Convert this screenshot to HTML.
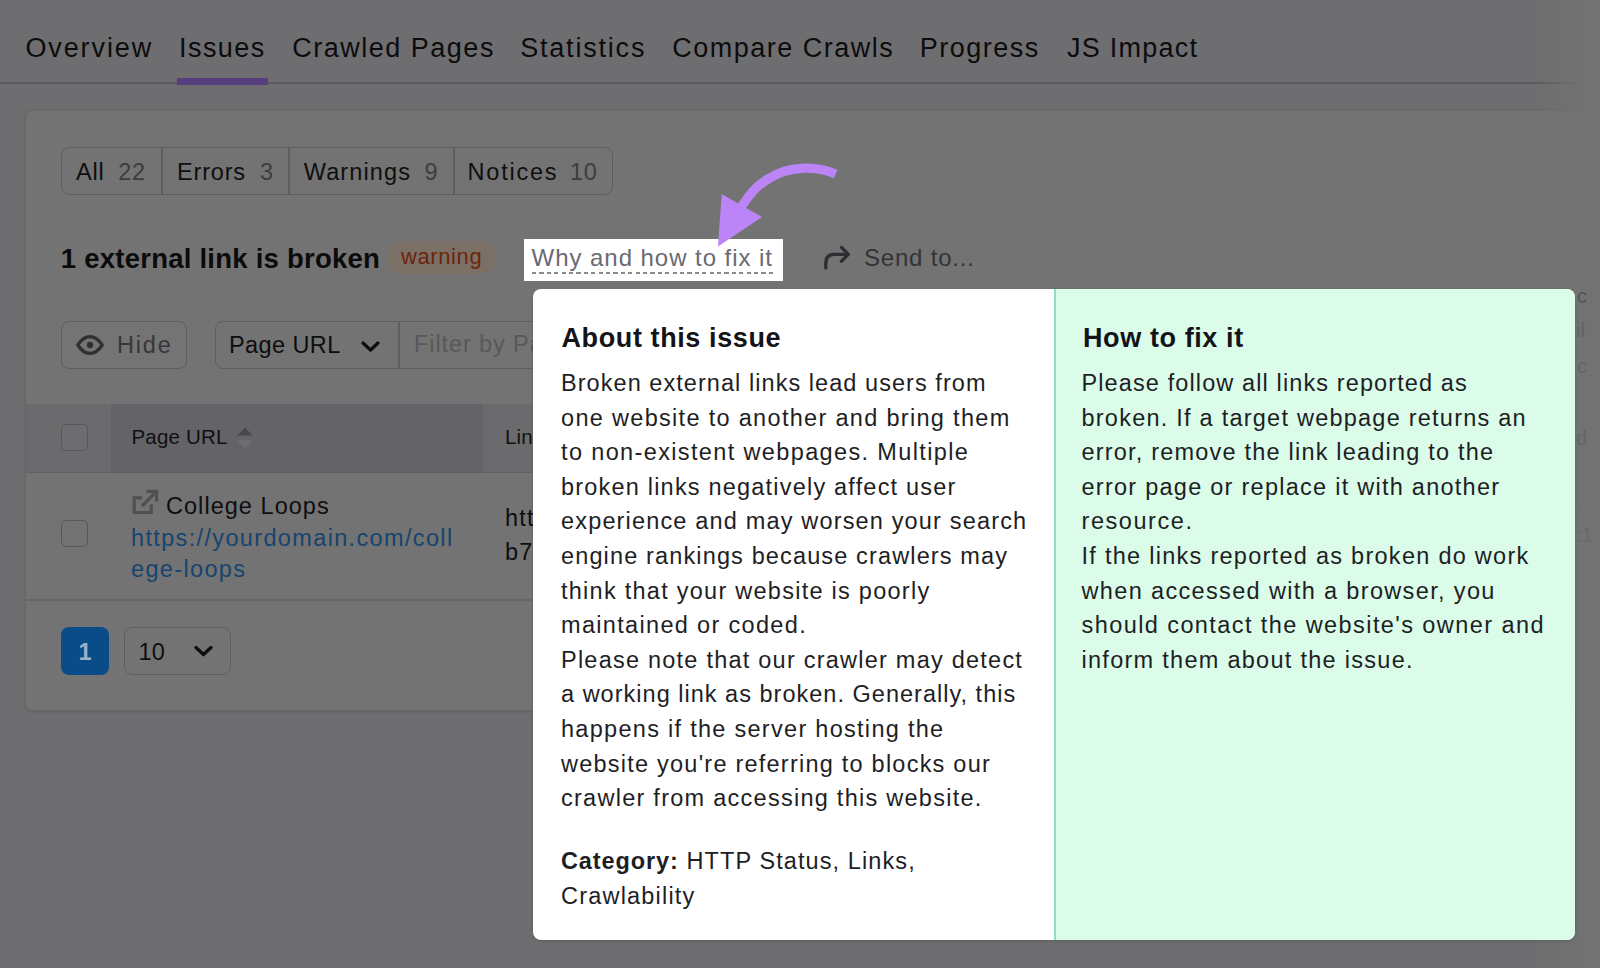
<!DOCTYPE html>
<html><head><meta charset="utf-8">
<style>
*{box-sizing:border-box;margin:0;padding:0}
html,body{width:1600px;height:968px;overflow:hidden;background:#6e6e70;font-family:"Liberation Sans",sans-serif;position:relative}
.t{position:absolute;white-space:nowrap;line-height:1}
.tab{font-size:27px;color:#0c0c0e;letter-spacing:1.5px;top:35px}
#tabline{position:absolute;left:0;top:82px;width:1600px;height:2px;background:#5b5b5e}
#tabul{position:absolute;left:177px;top:78px;width:91px;height:7px;background:#573f7f}
#card{position:absolute;left:25px;top:110px;width:1600px;height:601px;background:#737373;border:1px solid #68686a;border-radius:7px;box-shadow:0 -2px 0 #6b6b6d,0 1px 2px rgba(0,0,0,0.15)}
.box{position:absolute;border:1.5px solid #5e5e60;border-radius:8px}
.vd{position:absolute;width:1.5px;background:#5e5e60}
.seg{font-size:23.5px;color:#0f0f10;letter-spacing:0.8px;top:160.8px}
.segc{color:#3d3d40}
#h1{font-size:27.5px;font-weight:bold;color:#0b0b0c;letter-spacing:0.24px;left:60.8px;top:244.7px}
#badge{position:absolute;left:387px;top:241px;width:110px;height:33px;border-radius:17px;background:#7a7066}
#badget{font-size:22px;color:#6e240c;letter-spacing:0.6px;left:401px;top:246.3px}
#why{position:absolute;left:524px;top:239px;width:259px;height:42px;background:#fff}
#whyt{font-size:24px;color:#6a6a74;letter-spacing:0.95px;left:531.6px;top:245.7px}
#whyu{position:absolute;left:532px;top:272px;width:243px;height:2px;background:repeating-linear-gradient(90deg,#8a8a92 0,#8a8a92 4.2px,transparent 4.2px,transparent 7.4px)}
#send{font-size:24px;color:#333336;letter-spacing:0.8px;left:864px;top:246.3px}
.b23{font-size:23.5px}
#popup{position:absolute;left:533px;top:289px;width:1042px;height:651px;background:#fff;border-radius:8px;overflow:hidden;box-shadow:0 1px 3px rgba(0,0,0,0.18)}
#pright{position:absolute;left:521px;top:0;width:521px;height:651px;background:#dafce9;border-left:2px solid #8ee0bf}
.ph{position:absolute;font-size:27px;line-height:1;font-weight:bold;color:#131318;letter-spacing:0.6px;white-space:nowrap}
.pb{position:absolute;font-size:23.5px;line-height:34.6px;color:#1e1e24;letter-spacing:1.2px;white-space:nowrap}
</style></head><body>
<div id="tabline"></div>
<div id="tabul"></div>
<div class="t tab" style="left:25.4px;letter-spacing:1.9px">Overview</div>
<div class="t tab" style="left:179px;letter-spacing:1.45px">Issues</div>
<div class="t tab" style="left:292.3px">Crawled Pages</div>
<div class="t tab" style="left:520.2px;letter-spacing:1.8px">Statistics</div>
<div class="t tab" style="left:672.2px">Compare Crawls</div>
<div class="t tab" style="left:919.8px">Progress</div>
<div class="t tab" style="left:1067px;letter-spacing:1.25px">JS Impact</div>

<div id="card"></div>
<div class="box" style="left:61px;top:147px;width:552px;height:48px"></div>
<div class="vd" style="left:161px;top:147px;height:48px"></div>
<div class="vd" style="left:288px;top:147px;height:48px"></div>
<div class="vd" style="left:453px;top:147px;height:48px"></div>
<div class="t seg" style="left:76px">All</div>
<div class="t seg segc" style="left:118.2px">22</div>
<div class="t seg" style="left:177.1px">Errors</div>
<div class="t seg segc" style="left:259.9px">3</div>
<div class="t seg" style="left:303.8px;letter-spacing:1.1px">Warnings</div>
<div class="t seg segc" style="left:424.6px">9</div>
<div class="t seg" style="left:467.6px;letter-spacing:1.75px">Notices</div>
<div class="t seg segc" style="left:570px">10</div>

<div id="h1" class="t">1 external link is broken</div>
<div id="badge"></div>
<div id="badget" class="t">warning</div>
<div id="why"></div>
<div id="whyt" class="t">Why and how to fix it</div>
<div id="whyu"></div>
<svg style="position:absolute;left:820px;top:243px" width="34" height="30" viewBox="0 0 34 30"><path d="M5.8 25 V20.5 Q5.8 11.4 14.5 11.4 H27.5" fill="none" stroke="#2e2e32" stroke-width="3.3" stroke-linecap="round"/><path d="M21.5 4.4 L28.3 11.3 L21.5 18.2" fill="none" stroke="#2e2e32" stroke-width="3.3" stroke-linecap="round" stroke-linejoin="round"/></svg>
<div id="send" class="t">Send to...</div>

<!-- controls -->
<div class="box" style="left:61px;top:321px;width:126px;height:48px;background:#747475"></div>
<svg style="position:absolute;left:74px;top:332px" width="32" height="26" viewBox="0 0 32 26"><path d="M3.8 13 C8 6.5 12 4.6 16 4.6 C20 4.6 24 6.5 28.2 13 C24 19.5 20 21.4 16 21.4 C12 21.4 8 19.5 3.8 13Z" fill="none" stroke="#303034" stroke-width="3.3" stroke-linejoin="round"/><circle cx="16" cy="13" r="3.2" fill="#303034"/></svg>
<div class="t b23" style="left:117px;top:333.7px;color:#363639;letter-spacing:1.8px">Hide</div>
<div class="box" style="left:215px;top:321px;width:400px;height:48px"></div>
<div class="vd" style="left:398px;top:321px;height:48px"></div>
<div class="t b23" style="left:229px;top:333.7px;color:#0d0d0f;letter-spacing:0.4px">Page URL</div>
<svg style="position:absolute;left:360px;top:339px" width="21" height="15" viewBox="0 0 21 15"><path d="M3 4 L10.5 11 L18 4" fill="none" stroke="#0d0d0f" stroke-width="3.2" stroke-linecap="round" stroke-linejoin="round"/></svg>
<div class="t b23" style="left:414px;top:333.4px;color:#58585b;letter-spacing:0.9px">Filter by Page URL</div>

<!-- table -->
<div style="position:absolute;left:26px;top:404px;width:1544px;height:69px;background:#6b6b6d;border-bottom:1px solid #626264"></div>
<div style="position:absolute;left:111px;top:404px;width:372px;height:69px;background:#646468;border-bottom:1px solid #5f5f62"></div>
<div style="position:absolute;left:61px;top:424px;width:27px;height:27px;border:1.5px solid #58585b;border-radius:5px;background:#6d6d6f"></div>
<div class="t" style="left:131.5px;top:427.3px;font-size:20.5px;color:#101012;letter-spacing:0.2px">Page URL</div>
<svg style="position:absolute;left:236px;top:426px" width="18" height="24" viewBox="0 0 18 24"><path d="M1.5 9.5 L9 1.5 L16.5 9.5 Z" fill="#48484c"/><path d="M1.5 14 L9 22 L16.5 14 Z" fill="#6f6f73"/></svg>
<div class="t" style="left:505px;top:427px;font-size:20.5px;color:#101012;letter-spacing:0.2px">Link</div>

<div style="position:absolute;left:26px;top:599px;width:1544px;height:1.5px;background:#666668"></div>
<div style="position:absolute;left:61px;top:520px;width:27px;height:27px;border:1.5px solid #58585b;border-radius:5px;background:#737374"></div>
<svg style="position:absolute;left:131px;top:488px" width="28" height="28" viewBox="0 0 28 28"><path d="M11 9.9 H3.2 V24.5 H20.3 V16.5" fill="none" stroke="#505054" stroke-width="3.2"/><path d="M11 18 L24 5" fill="none" stroke="#505054" stroke-width="3.2"/><path d="M15.5 3.4 H25.6 V13.5" fill="none" stroke="#505054" stroke-width="3.2"/></svg>
<div class="t b23" style="left:166px;top:495px;color:#0e0e10;letter-spacing:1.04px">College Loops</div>
<div class="t b23" style="left:131px;top:526.7px;color:#16446f;letter-spacing:1.35px">https://yourdomain.com/coll</div>
<div class="t b23" style="left:131px;top:557.5px;color:#16446f;letter-spacing:1.35px">ege-loops</div>
<div class="t b23" style="left:505px;top:506.6px;color:#0e0e10;letter-spacing:1.2px">https://</div>
<div class="t b23" style="left:505px;top:540.7px;color:#0e0e10;letter-spacing:1.2px">b7</div>

<!-- pagination -->
<div style="position:absolute;left:61px;top:627px;width:48px;height:48px;border-radius:8px;background:#0a4b89"></div>
<div class="t b23" style="left:78.5px;top:640.6px;color:#9cb0c8;font-weight:bold">1</div>
<div class="box" style="left:124px;top:627px;width:107px;height:48px"></div>
<div class="t b23" style="left:138.4px;top:640.6px;color:#0e0e10;letter-spacing:0.3px">10</div>
<svg style="position:absolute;left:193px;top:643px" width="21" height="15" viewBox="0 0 21 15"><path d="M3 4.5 L10.5 11.5 L18 4.5" fill="none" stroke="#0e0e10" stroke-width="3.4" stroke-linecap="round" stroke-linejoin="round"/></svg>

<div style="position:absolute;left:1535px;top:0;width:65px;height:968px;background:linear-gradient(90deg,rgba(114,114,114,0) 0,rgba(114,114,114,1) 50px)"></div>
<!-- fragments behind popup right -->
<div class="t" style="left:1577px;top:286px;font-size:20px;color:#555557">c</div>
<div class="t" style="left:1576px;top:320px;font-size:20px;color:#626264">il</div>
<div class="t" style="left:1577px;top:356px;font-size:20px;color:#656567">c</div>
<div class="t" style="left:1576px;top:428px;font-size:20px;color:#656567">d</div>
<div class="t" style="left:1576px;top:525px;font-size:20px;color:#68686a">:1</div>

<!-- popup -->
<div id="popup">
  <div class="ph" style="left:28.5px;top:36.3px">About this issue</div>
  <div class="pb" style="left:28px;top:77px">
<div style="letter-spacing:1.053px">Broken external links lead users from</div>
<div style="letter-spacing:1.311px">one website to another and bring them</div>
<div style="letter-spacing:1.364px">to non-existent webpages. Multiple</div>
<div style="letter-spacing:1.200px">broken links negatively affect user</div>
<div style="letter-spacing:1.164px">experience and may worsen your search</div>
<div style="letter-spacing:1.137px">engine rankings because crawlers may</div>
<div style="letter-spacing:1.259px">think that your website is poorly</div>
<div style="letter-spacing:1.326px">maintained or coded.</div>
<div style="letter-spacing:1.232px">Please note that our crawler may detect</div>
<div style="letter-spacing:1.015px">a working link as broken. Generally, this</div>
<div style="letter-spacing:1.287px">happens if the server hosting the</div>
<div style="letter-spacing:1.230px">website you're referring to blocks our</div>
<div style="letter-spacing:1.263px">crawler from accessing this website.</div>
</div>
  <div class="pb" style="left:28px;top:555px"><b style="letter-spacing:0.9px">Category:</b><span style="letter-spacing:1.1px"> HTTP Status, Links,</span><br>Crawlability</div>
  <div id="pright">
    <div class="ph" style="left:27px;top:36.3px">How to fix it</div>
    <div class="pb" style="left:25.5px;top:77px">
<div style="letter-spacing:1.112px">Please follow all links reported as</div>
<div style="letter-spacing:1.235px">broken. If a target webpage returns an</div>
<div style="letter-spacing:1.200px">error, remove the link leading to the</div>
<div style="letter-spacing:1.258px">error page or replace it with another</div>
<div style="letter-spacing:1.563px">resource.</div>
<div style="letter-spacing:1.274px">If the links reported as broken do work</div>
<div style="letter-spacing:1.350px">when accessed with a browser, you</div>
<div style="letter-spacing:1.419px">should contact the website's owner and</div>
<div style="letter-spacing:1.278px">inform them about the issue.</div>
</div>
  </div>
</div>

<!-- purple arrow -->
<svg style="position:absolute;left:700px;top:150px" width="150" height="110" viewBox="0 0 150 110">
<path d="M135.6 24 C115 15.5 88 16 70 28 C54 36 46 50 38 62" fill="none" stroke="#bb85f8" stroke-width="9.3"/>
<path d="M21.7 43.9 L62 67.1 L18 96.6 Z" fill="#bb85f8"/>
</svg>
</body></html>
